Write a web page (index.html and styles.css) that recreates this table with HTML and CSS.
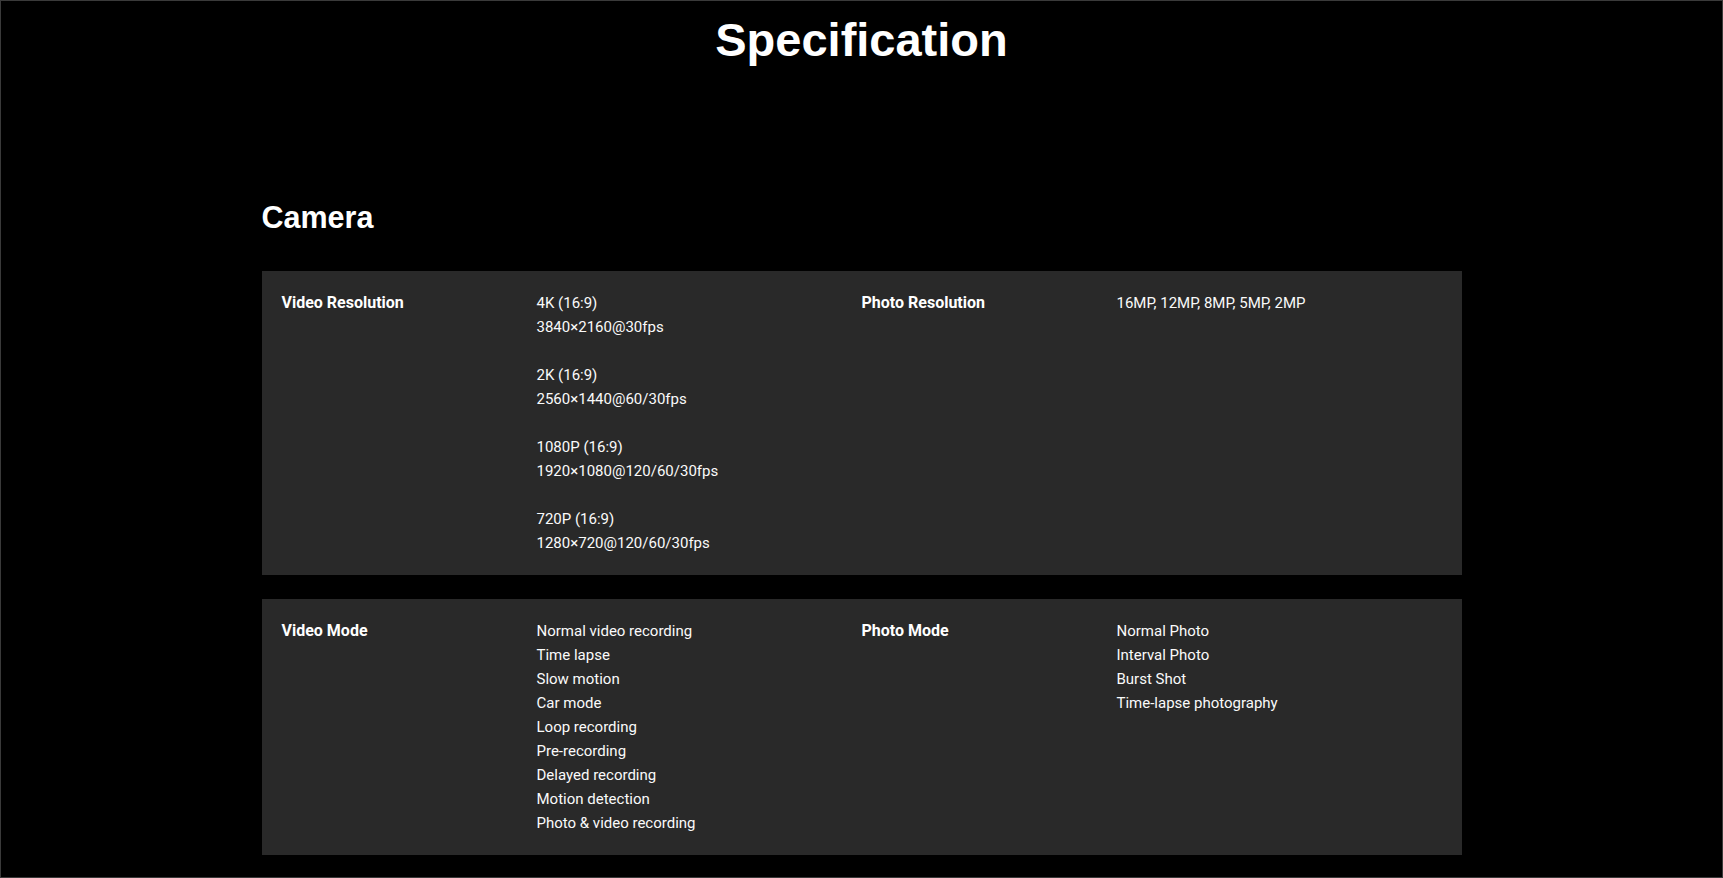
FILE: index.html
```html
<!DOCTYPE html>
<html lang="en">
<head>
<meta charset="utf-8">
<title>Specification</title>
<link rel="stylesheet" href="styles.css">
</head>
<body>
<div class="page">
  <h1 class="page-title">Specification</h1>
  <section class="spec-section">
    <h2 class="section-title">Camera</h2>
    <div class="spec-card">
      <div class="spec-label">Video Resolution</div>
      <div class="spec-value">4K (16:9)<br>3840×2160@30fps<br><br>2K (16:9)<br>2560×1440@60/30fps<br><br>1080P (16:9)<br>1920×1080@120/60/30fps<br><br>720P (16:9)<br>1280×720@120/60/30fps</div>
      <div class="spec-label">Photo Resolution</div>
      <div class="spec-value">16MP, 12MP, 8MP, 5MP, 2MP</div>
    </div>
    <div class="spec-card">
      <div class="spec-label">Video Mode</div>
      <div class="spec-value">Normal video recording<br>Time lapse<br>Slow motion<br>Car mode<br>Loop recording<br>Pre-recording<br>Delayed recording<br>Motion detection<br>Photo &amp; video recording</div>
      <div class="spec-label">Photo Mode</div>
      <div class="spec-value">Normal Photo<br>Interval Photo<br>Burst Shot<br>Time-lapse photography</div>
    </div>
  </section>
</div>
</body>
</html>
```
FILE: styles.css
```css
html, body {
  margin: 0;
  padding: 0;
  background: #000;
}
body {
  color: #fff;
  font-family: Roboto, "Liberation Sans", sans-serif;
}
.page {
  box-sizing: border-box;
  min-height: 878px;
  border: 1px solid #3a3a3a;
  padding: 11px 0 22px;
  overflow: hidden;
}
.page-title {
  margin: 0;
  text-align: center;
  font-family: "Liberation Sans", Arial, sans-serif;
  font-weight: 700;
  font-size: 47px;
  line-height: 56px;
  color: #fff;
}
.spec-section {
  width: 1200px;
  margin: 131px auto 0;
}
.section-title {
  margin: 0 0 36px;
  font-family: "Liberation Sans", Arial, sans-serif;
  font-weight: 700;
  font-size: 30.5px;
  line-height: 36px;
  color: #fff;
}
.spec-card {
  display: grid;
  grid-template-columns: 255px 325px 255px 325px;
  align-items: start;
  background: #292929;
  padding: 20px;
  margin-bottom: 24px;
  font-size: 15px;
  line-height: 24px;
}
.spec-card:last-child {
  margin-bottom: 0;
}
.spec-label {
  font-weight: 700;
  font-size: 16px;
  color: #fff;
}
.spec-value {
  font-weight: 400;
  color: #fafafa;
}
```
